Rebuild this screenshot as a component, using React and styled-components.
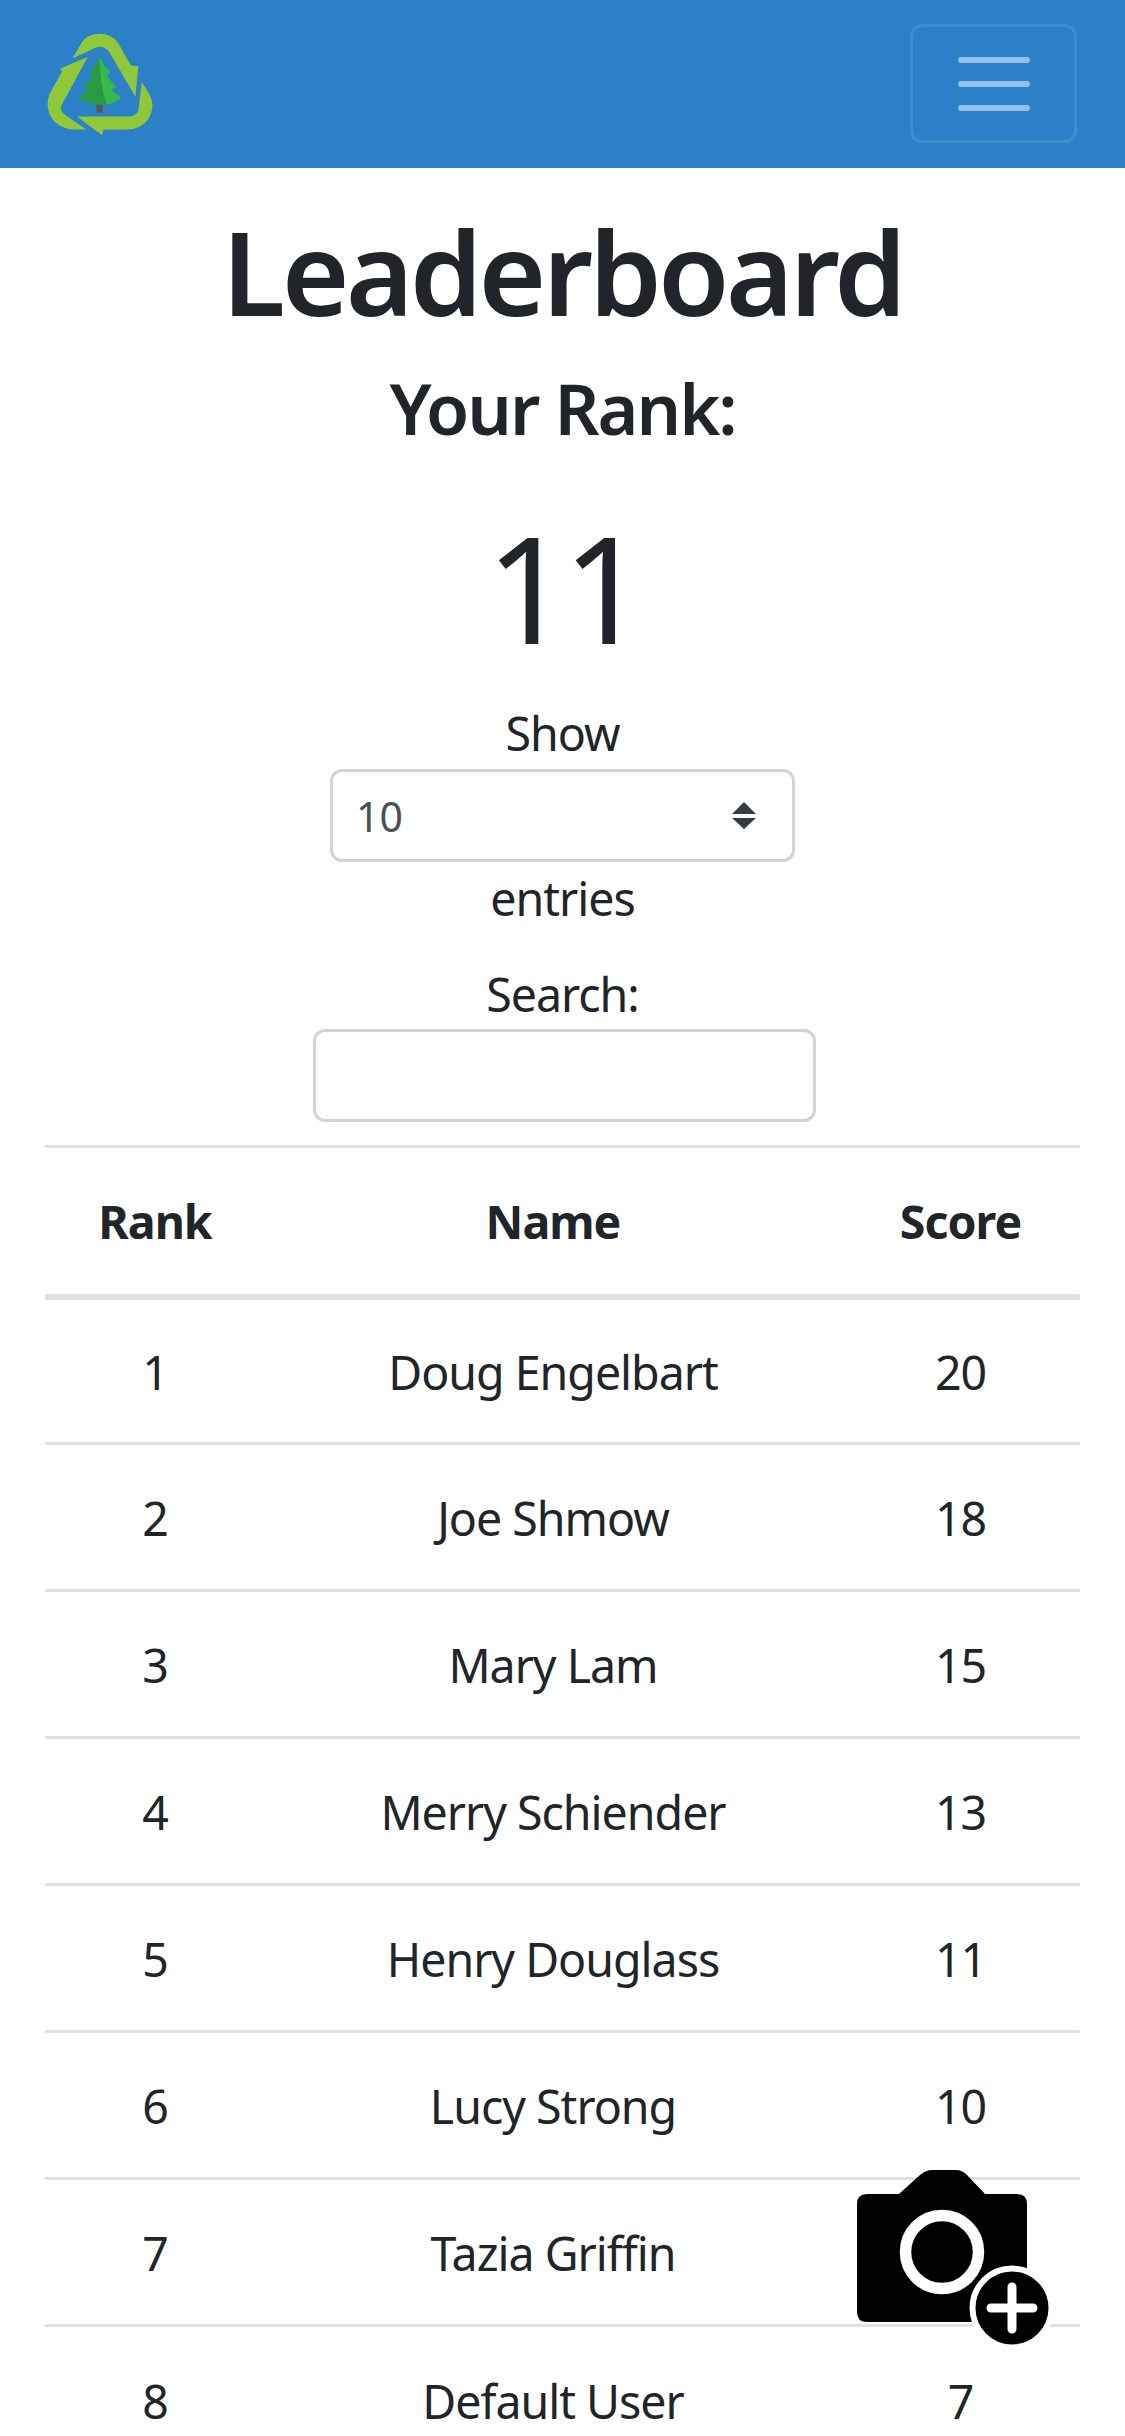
import React from "react";
import styled, { createGlobalStyle } from "styled-components";

const Global = createGlobalStyle`
  html, body { margin: 0; padding: 0; background: #fff; }
  body {
    font-family: "Noto Sans", "Open Sans", sans-serif;
    font-size: 46.5px;
    font-weight: 400;
    line-height: 72px;
    color: #212529;
    letter-spacing: -1px;
  }
  * { box-sizing: border-box; }
`;

const Page = styled.div`
  position: relative;
  width: 1125px;
  height: 2436px;
  overflow: hidden;
`;

const Navbar = styled.nav`
  height: 168px;
  background: #2b80c8;
  display: flex;
  align-items: center;
  justify-content: space-between;
  padding: 0 48px 0 43px;
`;

const Toggler = styled.button`
  width: 167px;
  height: 119px;
  padding: 0;
  margin-top: -1px;
  background: transparent;
  border: 3px solid rgba(255, 255, 255, 0.1);
  border-radius: 12px;
  display: flex;
  align-items: center;
  justify-content: center;
`;

const Main = styled.main`
  padding: 0 45px;
  text-align: center;
`;

const Title = styled.h1`
  margin: 0;
  padding-top: 31px;
  font-size: 116px;
  line-height: 144px;
  font-weight: 600;
  letter-spacing: -3.8px;
`;

const RankLabel = styled.h3`
  margin: 22px 0 0;
  font-size: 70px;
  line-height: 86px;
  font-weight: 600;
  letter-spacing: -2px;
`;

const RankValue = styled.div`
  margin: 36px 0 10px;
  font-size: 148px;
  line-height: 200px;
  font-weight: 400;
  letter-spacing: -8px;
`;

const Label = styled.div`
  line-height: 72px;
`;

const SearchLabel = styled(Label)`
  margin-top: 24px;
`;

const FilterBlock = styled.div`
  display: flex;
  flex-direction: column;
  align-items: center;
`;

const SelectWrap = styled.div`
  position: relative;
  width: 465px;
  height: 93px;
`;

const Select = styled.select`
  appearance: none;
  width: 100%;
  height: 100%;
  padding: 0 23px;
  background: #fff;
  border: 3px solid #ced4da;
  border-radius: 12px;
  font: inherit;
  font-size: 41px;
  color: #495057;
`;

const Arrows = styled.svg`
  position: absolute;
  right: 39px;
  top: 33px;
`;

const SearchInput = styled.input`
  display: block;
  width: 503px;
  height: 93px;
  margin: -1px 0 0 3px;
  background: #fff;
  border: 3px solid #ced4da;
  border-radius: 12px;
`;

const Table = styled.table`
  width: 1035px;
  margin-top: 23px;
  table-layout: fixed;
  border-collapse: collapse;
`;

const Head = styled.th`
  height: 150px;
  padding: 0;
  border-top: 3px solid #dee2e6;
  border-bottom: 6px solid #dee2e6;
  font-weight: 700;
  letter-spacing: -1px;
`;

const Cell = styled.td`
  height: 147px;
  padding: 2px 0 0;
  border-top: 3px solid #dee2e6;
`;

const Fab = styled.svg`
  position: absolute;
  left: 850px;
  top: 2165px;
`;

const rows = [
  [1, "Doug Engelbart", 20],
  [2, "Joe Shmow", 18],
  [3, "Mary Lam", 15],
  [4, "Merry Schiender", 13],
  [5, "Henry Douglass", 11],
  [6, "Lucy Strong", 10],
  [7, "Tazia Griffin", 9],
  [8, "Default User", 7],
];

const Logo = () => (
  <svg width="113" height="110" viewBox="130 85 340 330" aria-label="logo">
    <g fill="#8fc93a">
      <path d="M218 173 L250 120 Q270 99 300 99 Q335 99 355 125 L395 195 L417 196 L408 288 L330 155 Q318 138 300 138 Q290 138 280 145 Z" />
      <path d="M265 168 L180 205 L188 212 L155 270 Q143 290 144 315 Q148 365 195 382 Q205 387 215 387 L260 387 L195 342 Q178 330 187 312 Z" />
      <path d="M427 244 L417 330 Q410 347 390 348 L232 348 L308 404 L312 388 L385 387 Q425 385 447 355 Q470 320 450 280 Z" />
    </g>
    <rect x="291" y="312" width="18" height="24" fill="#5d5348" />
    <path d="M300 167 L287 195 L268 215 L280 226 L252 258 L266 268 L235 292 Q265 313 320 312 L300 167 Z" fill="#289a3f" />
    <path d="M300 167 L315 195 L333 215 L322 226 L350 258 L337 268 L366 292 Q345 308 322 312 Q300 250 300 167 Z" fill="#37b84a" />
  </svg>
);

const Burger = () => (
  <svg width="72" height="54" viewBox="0 0 72 54" aria-hidden="true">
    <g stroke="rgba(255,255,255,0.5)" strokeWidth="6" strokeLinecap="round">
      <path d="M3 3H69M3 27H69M3 51H69" />
    </g>
  </svg>
);

const Camera = () => (
  <Fab width="210" height="210" viewBox="850 2165 210 210" aria-label="Add photo">
    <path
      d="M867 2194 H899 L920 2175 Q926 2170 932 2170 H956 Q962 2170 967 2175 L985 2194 H1017 Q1027 2194 1027 2204 V2312 Q1027 2322 1017 2322 H867 Q857 2322 857 2312 V2204 Q857 2194 867 2194 Z"
      fill="#000"
    />
    <circle cx="942" cy="2252" r="36.5" fill="none" stroke="#fff" strokeWidth="11.5" />
    <circle cx="1012" cy="2308" r="39.5" fill="#000" stroke="#fff" strokeWidth="6" />
    <path d="M991 2308 H1033 M1012 2287 V2329" stroke="#fff" strokeWidth="9" strokeLinecap="round" />
  </Fab>
);

export default function App() {
  return (
    <Page>
      <Global />
      <Navbar>
        <Logo />
        <Toggler aria-label="Toggle navigation">
          <Burger />
        </Toggler>
      </Navbar>
      <Main>
        <Title>Leaderboard</Title>
        <RankLabel>Your Rank:</RankLabel>
        <RankValue>11</RankValue>
        <FilterBlock>
          <Label>Show</Label>
          <SelectWrap>
            <Select defaultValue="10" aria-label="Show entries">
              <option>10</option>
              <option>25</option>
              <option>50</option>
            </Select>
            <Arrows width="24" height="27" viewBox="0 0 24 27" aria-hidden="true">
              <path d="M12 0 L24 12 H0 Z M0 16 H24 L12 27 Z" fill="#343a40" />
            </Arrows>
          </SelectWrap>
          <Label>entries</Label>
          <SearchLabel>Search:</SearchLabel>
          <SearchInput aria-label="Search" />
        </FilterBlock>
        <Table>
          <colgroup>
            <col width="220" />
            <col width="576" />
            <col width="239" />
          </colgroup>
          <thead>
            <tr>
              <Head>Rank</Head>
              <Head>Name</Head>
              <Head>Score</Head>
            </tr>
          </thead>
          <tbody>
            {rows.map(([r, n, s]) => (
              <tr key={r}>
                <Cell>{r}</Cell>
                <Cell>{n}</Cell>
                <Cell>{s}</Cell>
              </tr>
            ))}
          </tbody>
        </Table>
      </Main>
      <Camera />
    </Page>
  );
}
